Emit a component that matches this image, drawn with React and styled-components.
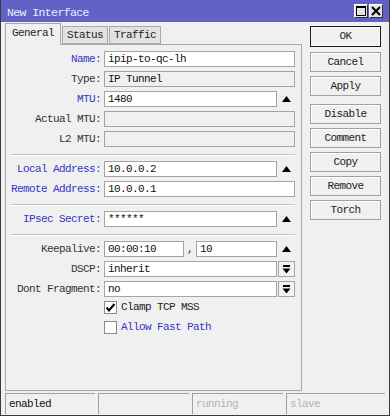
import React from 'react'
import styled, { createGlobalStyle } from 'styled-components'

const GlobalStyle = createGlobalStyle`
  html, body {
    margin: 0;
    padding: 0;
    background: #f0f0f0;
  }
`

const Window = styled.div`
  width: 390px;
  height: 416px;
  box-sizing: border-box;
  border: 1px solid #3a3a3a;
  border-top: none;
  background: #f0f0f0;
  display: flex;
  flex-direction: column;
  font-family: "Liberation Mono", "Courier New", monospace;
  font-size: 11px;
  letter-spacing: -0.6px;
  color: #222;
  overflow: hidden;
`

const TitleBar = styled.div`
  height: 22px;
  flex: none;
  background: #6262c6;
  display: flex;
  align-items: center;
  padding: 0 6px 0 6px;
  color: #eeeeff;
  font-size: 11.5px;
`

const TitleText = styled.span`
  flex: 1;
  padding-top: 2px;
`

const TitleButton = styled.div`
  width: 14px;
  height: 14px;
  box-sizing: border-box;
  margin-left: 1px;
  background: #e4e4e4;
  border: 1px solid;
  border-color: #ffffff #303030 #303030 #ffffff;
  display: flex;
  align-items: center;
  justify-content: center;
`

const Body = styled.div`
  flex: 1;
  display: flex;
  padding: 1px 0 0 4px;
  min-height: 0;
`

const LeftColumn = styled.div`
  width: 297px;
  display: flex;
  flex-direction: column;
`

const Tabs = styled.div`
  display: flex;
  align-items: flex-end;
  height: 21px;
  flex: none;
`

const Tab = styled.div`
  box-sizing: border-box;
  height: ${p => (p.$active ? '22px' : '18px')};
  padding: 0 ${p => (p.$active ? '6px' : '4px')};
  margin-bottom: ${p => (p.$active ? '-1px' : '0')};
  margin-right: 1px;
  position: relative;
  z-index: ${p => (p.$active ? 1 : 0)};
  background: ${p => (p.$active ? '#f0f0f0' : '#e2e2e2')};
  border: 1px solid #a8a8a8;
  border-bottom: ${p => (p.$active ? 'none' : '1px solid #a8a8a8')};
  line-height: ${p => (p.$active ? '19px' : '16px')};
  color: #222;
`

const Panel = styled.div`
  flex: 1;
  box-sizing: border-box;
  border: 1px solid #a8a8a8;
  padding-top: 6px;
`

const Row = styled.div`
  display: grid;
  grid-template-columns: 95px 191px;
  column-gap: 3px;
  height: 20px;
  align-items: start;
`

const Label = styled.div`
  text-align: right;
  line-height: 16px;
  white-space: nowrap;
  color: ${p => (p.$blue ? '#3434c8' : '#333')};
`

const FieldGroup = styled.div`
  display: flex;
  align-items: center;
  height: 16px;
`

const Field = styled.div`
  box-sizing: border-box;
  height: 16px;
  width: ${p => (p.$width ? `${p.$width}px` : 'auto')};
  flex: ${p => (p.$width ? 'none' : '1')};
  border: 1px solid #a4a4a4;
  background: ${p => (p.$disabled ? '#f0f0f0' : '#ffffff')};
  padding: 0 3px;
  line-height: 14px;
  white-space: nowrap;
  overflow: hidden;
  color: #111;
`

const Addon = styled.div`
  width: 18px;
  height: 16px;
  flex: none;
  display: flex;
  align-items: center;
  justify-content: center;
`

const Comma = styled.div`
  width: 12px;
  flex: none;
  text-align: center;
  line-height: 16px;
`

const DropButton = styled.div`
  box-sizing: border-box;
  width: 17px;
  height: 16px;
  margin-left: 1px;
  flex: none;
  border: 1px solid #a4a4a4;
  background: #f4f4f4;
  display: flex;
  align-items: center;
  justify-content: center;
`

const Separator = styled.div`
  height: 1px;
  background: #c4c4c4;
  border-bottom: 1px solid #ffffff;
  margin: 3px 6px 5px 5px;
`

const CheckRow = styled.div`
  display: flex;
  align-items: center;
  height: 13px;
`

const CheckBox = styled.div`
  box-sizing: border-box;
  width: 13px;
  height: 13px;
  border: 1px solid #8c8c8c;
  background: #ffffff;
  display: flex;
  align-items: center;
  justify-content: center;
`

const CheckLabel = styled.span`
  margin-left: 4px;
  line-height: 13px;
  color: ${p => (p.$blue ? '#3434c8' : '#222')};
`

const ButtonColumn = styled.div`
  width: 71px;
  margin-left: 8px;
  padding-top: 3px;
  display: flex;
  flex-direction: column;
  gap: 4px;
`

const Button = styled.div`
  box-sizing: border-box;
  height: ${p => (p.$default ? '21px' : '20px')};
  margin-top: ${p => (p.$space ? `${p.$space}px` : '0')};
  border: 1px solid ${p => (p.$default ? '#1a1a1a' : '#a0a0a0')};
  box-shadow: ${p => (p.$default ? 'inset 0 0 0 1px #f8f8f8' : 'inset 1px 1px 0 #ffffff')};
  background: #f0f0f0;
  text-align: center;
  line-height: 18px;
  color: #222;
`

const StatusBar = styled.div`
  flex: none;
  display: grid;
  grid-template-columns: 90px 91px 91px 1fr;
  column-gap: 3px;
  padding: 2px 4px 1px 4px;
`

const StatusCell = styled.div`
  height: 21px;
  box-sizing: border-box;
  border-top: 1px solid #a0a0a0;
  border-left: 1px solid #a0a0a0;
  padding-left: 3px;
  line-height: 20px;
  color: ${p => (p.$muted ? '#b4b4b4' : '#111')};
`

const UpArrow = () => (
  <svg width="9" height="6" viewBox="0 0 9 6">
    <polygon points="0,6 4.5,0 9,6" fill="#000" />
  </svg>
)

const DropIcon = () => (
  <svg width="9" height="9" viewBox="0 0 9 9">
    <rect x="1" y="0" width="7" height="2" fill="#000" />
    <polygon points="0.5,3.5 8.5,3.5 4.5,8.5" fill="#000" />
  </svg>
)

const CheckMark = () => (
  <svg width="11" height="11" viewBox="0 0 11 11">
    <path d="M1.5 5.5 L4 8.5 L9.5 2" stroke="#000" strokeWidth="2" fill="none" />
  </svg>
)

const MaxIcon = () => (
  <svg width="10" height="10" viewBox="0 0 10 10">
    <rect x="0.5" y="0.5" width="9" height="9" fill="none" stroke="#000" />
    <rect x="0" y="0" width="10" height="2" fill="#000" />
  </svg>
)

const CloseIcon = () => (
  <svg width="10" height="10" viewBox="0 0 10 10">
    <path d="M1 1 L9 9 M9 1 L1 9" stroke="#000" strokeWidth="2" />
  </svg>
)

const InputRow = ({ label, blue, value, disabled, addon }) => (
  <Row>
    <Label $blue={blue}>{label}:</Label>
    <FieldGroup>
      <Field $disabled={disabled}>{value}</Field>
      {addon === 'up' && (
        <Addon>
          <UpArrow />
        </Addon>
      )}
      {addon === 'drop' && (
        <DropButton>
          <DropIcon />
        </DropButton>
      )}
    </FieldGroup>
  </Row>
)

const buttons = [
  { text: 'OK', def: true },
  { text: 'Cancel', space: 1 },
  { text: 'Apply' },
  { text: 'Disable', space: 4 },
  { text: 'Comment' },
  { text: 'Copy' },
  { text: 'Remove' },
  { text: 'Torch' },
]

export default function App() {
  return (
    <>
      <GlobalStyle />
      <Window>
        <TitleBar>
          <TitleText>New Interface</TitleText>
          <TitleButton>
            <MaxIcon />
          </TitleButton>
          <TitleButton>
            <CloseIcon />
          </TitleButton>
        </TitleBar>
        <Body>
          <LeftColumn>
            <Tabs>
              <Tab $active>General</Tab>
              <Tab>Status</Tab>
              <Tab>Traffic</Tab>
            </Tabs>
            <Panel>
              <InputRow label="Name" blue value="ipip-to-qc-lh" />
              <InputRow label="Type" value="IP Tunnel" disabled />
              <InputRow label="MTU" blue value="1480" addon="up" />
              <InputRow label="Actual MTU" value="" disabled />
              <InputRow label="L2 MTU" value="" disabled />
              <Separator />
              <InputRow label="Local Address" blue value="10.0.0.2" addon="up" />
              <InputRow label="Remote Address" blue value="10.0.0.1" />
              <Separator />
              <InputRow label="IPsec Secret" blue value="******" addon="up" />
              <Separator />
              <Row>
                <Label>Keepalive:</Label>
                <FieldGroup>
                  <Field $width={80}>00:00:10</Field>
                  <Comma>,</Comma>
                  <Field>10</Field>
                  <Addon>
                    <UpArrow />
                  </Addon>
                </FieldGroup>
              </Row>
              <InputRow label="DSCP" value="inherit" addon="drop" />
              <InputRow label="Dont Fragment" value="no" addon="drop" />
              <Row>
                <span />
                <CheckRow>
                  <CheckBox>
                    <CheckMark />
                  </CheckBox>
                  <CheckLabel>Clamp TCP MSS</CheckLabel>
                </CheckRow>
              </Row>
              <Row>
                <span />
                <CheckRow>
                  <CheckBox />
                  <CheckLabel $blue>Allow Fast Path</CheckLabel>
                </CheckRow>
              </Row>
            </Panel>
          </LeftColumn>
          <ButtonColumn>
            {buttons.map(b => (
              <Button key={b.text} $default={b.def} $space={b.space}>
                {b.text}
              </Button>
            ))}
          </ButtonColumn>
        </Body>
        <StatusBar>
          <StatusCell>enabled</StatusCell>
          <StatusCell />
          <StatusCell $muted>running</StatusCell>
          <StatusCell $muted>slave</StatusCell>
        </StatusBar>
      </Window>
    </>
  )
}
